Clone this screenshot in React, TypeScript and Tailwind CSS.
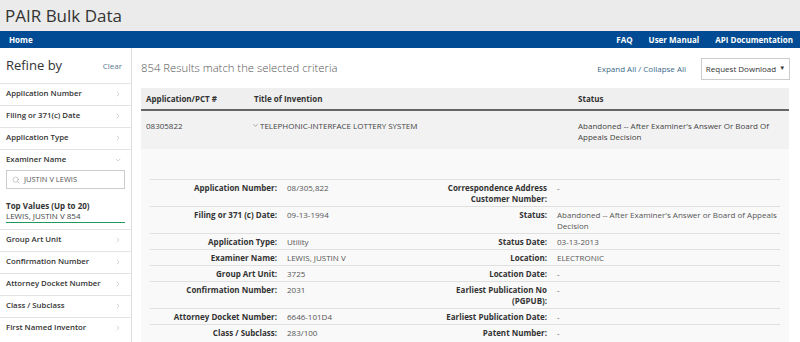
import { ChevronRight, ChevronDown, Search } from 'lucide-react';

const filters = [
  'Application Number',
  'Filing or 371(c) Date',
  'Application Type',
];

const moreFilters = [
  'Group Art Unit',
  'Confirmation Number',
  'Attorney Docket Number',
  'Class / Subclass',
  'First Named Inventor',
];

const details: [string, string, string, string][] = [
  ['Application Number:', '08/305,822', 'Correspondence Address Customer Number:', '-'],
  ['Filing or 371 (c) Date:', '09-13-1994', 'Status:', "Abandoned -- After Examiner's Answer or Board of Appeals Decision"],
  ['Application Type:', 'Utility', 'Status Date:', '03-13-2013'],
  ['Examiner Name:', 'LEWIS, JUSTIN V', 'Location:', 'ELECTRONIC'],
  ['Group Art Unit:', '3725', 'Location Date:', '-'],
  ['Confirmation Number:', '2031', 'Earliest Publication No (PGPUB):', '-'],
  ['Attorney Docket Number:', '6646-101D4', 'Earliest Publication Date:', '-'],
  ['Class / Subclass:', '283/100', 'Patent Number:', '-'],
];

function FilterRow({ label, open }: { label: string; open?: boolean }) {
  return (
    <div className="h-[22px] border-t border-[#e3e3e3] flex items-center justify-between pl-[6px] pr-[9px] pb-[2px] text-[7.8px] font-semibold text-[#333]">
      <span>{label}</span>
      {open ? (
        <ChevronDown className="w-[8px] h-[8px] text-[#aaa]" strokeWidth={1.5} />
      ) : (
        <ChevronRight className="w-[8px] h-[8px] text-[#aaa]" strokeWidth={1.5} />
      )}
    </div>
  );
}

export default function App() {
  return (
    <div className="w-[800px] h-[342px] overflow-hidden bg-white text-[#333] font-['Open_Sans',sans-serif]">
      <header className="h-[31px] bg-[#ebebeb] flex items-center pl-[5px] text-[17px] text-[#333]">
        PAIR Bulk Data
      </header>
      <nav className="h-[17px] bg-[#004b93] flex items-center justify-between pl-[9px] pr-[7px] text-white font-bold text-[8px]">
        <span>Home</span>
        <div className="flex gap-[16px]">
          <span>FAQ</span>
          <span>User Manual</span>
          <span>API Documentation</span>
        </div>
      </nav>

      <div className="flex">
        <aside className="w-[132px] shrink-0 border-r border-[#ddd] h-[294px]">
          <div className="h-[35px] flex items-center justify-between pl-[6px] pr-[9px]">
            <span className="text-[13px] text-[#333]">Refine by</span>
            <span className="text-[8px] text-[#5b7b91]">Clear</span>
          </div>
          {filters.map((f) => (
            <FilterRow key={f} label={f} />
          ))}
          <FilterRow label="Examiner Name" open />
          <div className="px-[6px] -mt-[1px]">
            <div className="h-[19px] border border-[#ccc] flex items-center gap-[4px] pl-[5px] text-[7.5px] text-[#555]">
              <Search className="w-[8px] h-[8px] text-[#999]" strokeWidth={1.5} />
              <span>JUSTIN V LEWIS</span>
            </div>
            <div className="pt-[11px] pb-[6px]">
              <div className="text-[8px] font-bold leading-[11px]">Top Values (Up to 20)</div>
              <div className="text-[8px] leading-[10px] text-[#444] border-b border-[#1e9a5c] pb-[1px]">
                LEWIS, JUSTIN V 854
              </div>
            </div>
          </div>
          {moreFilters.map((f) => (
            <FilterRow key={f} label={f} />
          ))}
        </aside>

        <main className="flex-1 pl-[9px] pr-[11px]">
          <div className="h-[40px] flex items-center justify-between pt-[1px]">
            <span className="text-[11.3px] font-light text-[#555]">854 Results match the selected criteria</span>
            <div className="flex items-center gap-[15px]">
              <span className="text-[8px] text-[#3d6a88]">Expand All / Collapse All</span>
              <button className="h-[22px] w-[89px] border border-[#ccc] bg-white text-[8px] text-[#333] flex items-center justify-center gap-[3px] mr-[-1px]">
                Request Download
                <span className="text-[6px]">▼</span>
              </button>
            </div>
          </div>

          <div className="h-[23px] bg-[#efefef] border-b-2 border-[#666] grid grid-cols-[108px_324px_1fr] items-center text-[8px] font-bold text-[#333] pl-[5px]">
            <span>Application/PCT #</span>
            <span>Title of Invention</span>
            <span>Status</span>
          </div>
          <div className="h-[38px] bg-[#f2f2f2] grid grid-cols-[108px_324px_1fr] pl-[5px] pt-[9px] text-[8px] leading-[11px] text-[#444]">
            <span>08305822</span>
            <span className="flex items-start -ml-[2px]">
              <ChevronDown className="w-[7px] h-[7px] mt-[2px] mr-[1px]" strokeWidth={1.5} />
              TELEPHONIC-INTERFACE LOTTERY SYSTEM
            </span>
            <span className="pr-[10px]">Abandoned -- After Examiner's Answer Or Board Of Appeals Decision</span>
          </div>

          <div className="bg-[#f9f9f9] pt-[30px] pl-[9px] pr-[9px] h-[200px]">
            <div className="grid grid-cols-[132px_148px_122px_1fr] text-[8px] leading-[11px]">
              {details.map(([l1, v1, l2, v2]) => (
                <div key={l1} className="contents">
                  <div className="border-t border-[#e0e0e0] pt-[2px] pb-[2px] pr-[5px] text-right font-bold text-[#333]">{l1}</div>
                  <div className="border-t border-[#e0e0e0] pt-[2px] pb-[2px] pl-[5px] text-[#555]">{v1}</div>
                  <div className="border-t border-[#e0e0e0] pt-[2px] pb-[2px] pr-[5px] text-right font-bold text-[#333]">{l2}</div>
                  <div className="border-t border-[#e0e0e0] pt-[2px] pb-[2px] pl-[5px] text-[#555]">{v2}</div>
                </div>
              ))}
            </div>
          </div>
        </main>
      </div>
    </div>
  );
}
